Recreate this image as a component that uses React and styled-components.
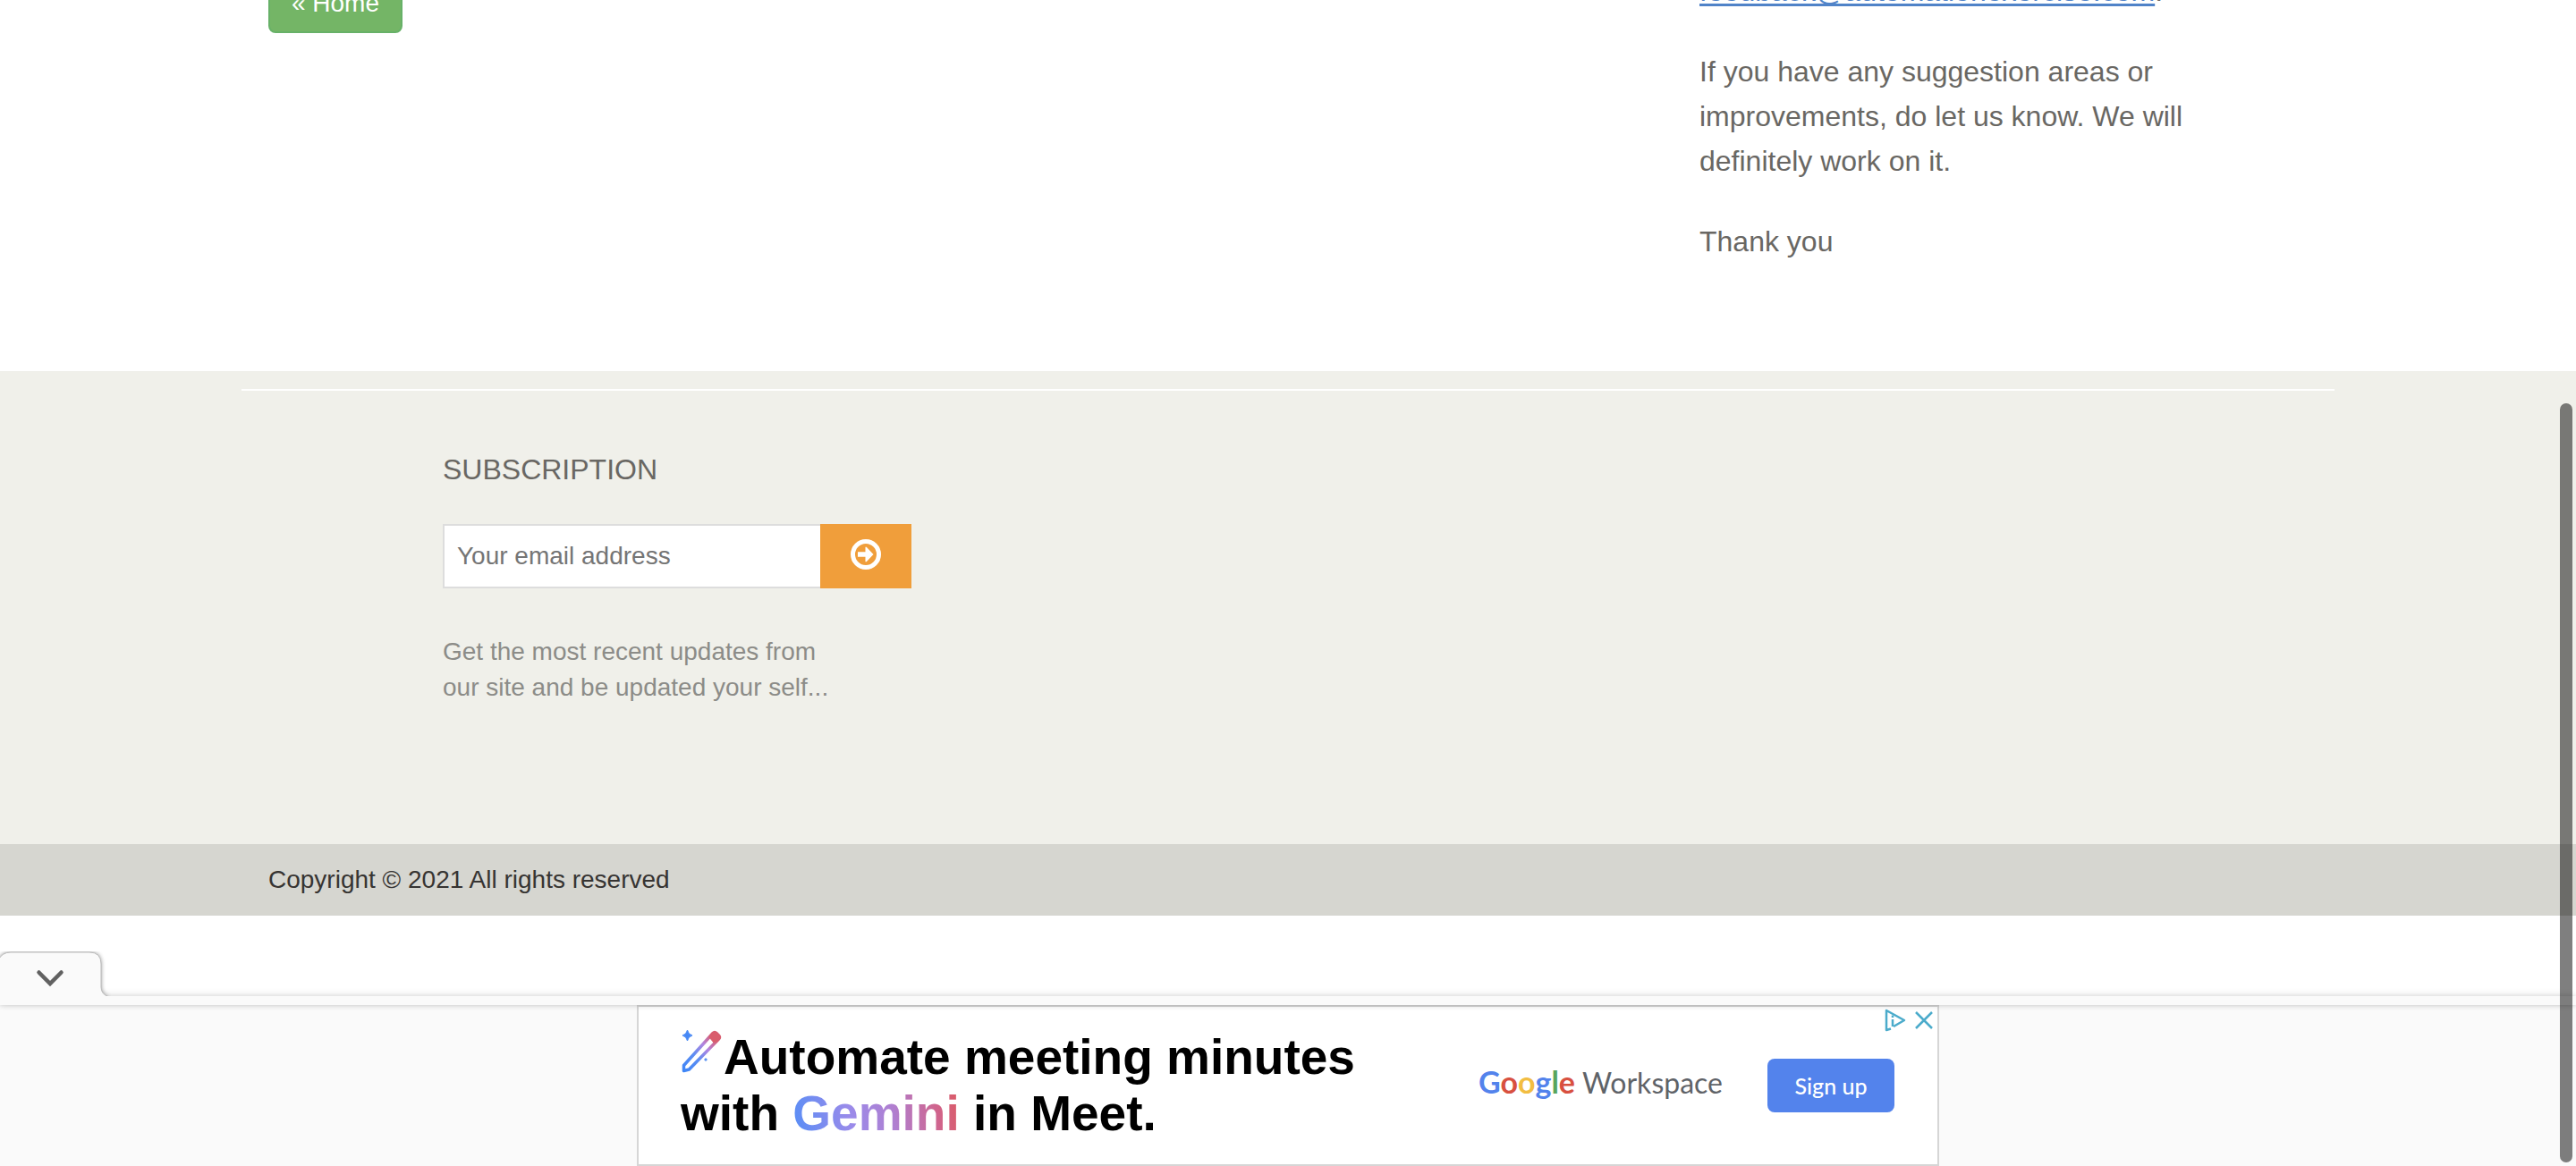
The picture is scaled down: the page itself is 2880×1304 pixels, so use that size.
import React from 'react';
import styled, { createGlobalStyle } from 'styled-components';

const Global = createGlobalStyle`
  * { box-sizing: border-box; }
  html, body { margin: 0; background: #fff; }
  body { font-family: "Liberation Sans", Arial, sans-serif; color: #696763; overflow: hidden; }
  p, h2, h3 { margin: 0; font-weight: 400; }
`;

const Page = styled.div`
  display: flex;
  flex-direction: column;
  height: 100vh;
`;

const Container = styled.div`
  width: 100%;
  max-width: 2340px;
  margin: 0 auto;
  padding: 0 30px;
`;

const Content = styled(Container)`
  display: flex;
  justify-content: space-between;
  align-items: flex-start;
  height: 415px;
`;

const HomeButton = styled.button`
  width: 150px;
  height: 68px;
  margin-top: -31px;
  padding: 2px 0 0;
  border: 2px solid #67b168;
  border-radius: 8px;
  background: #74b566;
  color: #fff;
  font: 28px/40px "Liberation Sans", Arial, sans-serif;
`;

const Feedback = styled.div`
  display: flex;
  flex-direction: column;
  gap: 40px;
  width: 680px;
  margin-top: -35px;
  font-size: 32px;
  line-height: 50px;
  p { max-width: 580px; }
`;

const MailLink = styled.a`
  color: #5083c8;
  text-decoration: underline;
  text-decoration-thickness: 3px;
  text-decoration-skip-ink: none;
  text-underline-offset: 3px;
`;

const Footer = styled.footer`
  background: #f0f0ea;
`;

const FooterTop = styled.div`
  padding: 20px 30px 0;
  height: 529px;
`;

const Rule = styled.hr`
  width: 100%;
  max-width: 2340px;
  height: 2px;
  margin: 0 auto;
  border: 0;
  background: #fff;
`;

const Widget = styled(Container)`
  display: flex;
  flex-direction: column;
  padding: 68px 225px 0;
`;

const WidgetTitle = styled.h2`
  font-size: 32px;
  line-height: 40px;
  text-transform: uppercase;
`;

const Form = styled.form`
  display: flex;
  height: 72px;
  margin: 41px 0 51px;
`;

const Email = styled.input`
  width: 422px;
  padding: 0 14px;
  border: 2px solid #ddd;
  border-right: 0;
  border-radius: 0;
  background: #fff;
  font: 28px "Liberation Sans", Arial, sans-serif;
  &::placeholder { color: #757575; opacity: 1; }
`;

const Submit = styled.button`
  display: flex;
  justify-content: center;
  align-items: center;
  width: 102px;
  padding: 0 0 4px;
  border: 0;
  background: #f09e3b;
`;

const Note = styled.p`
  color: #8c8c88;
  font-size: 28px;
  line-height: 40px;
`;

const Copyright = styled.div`
  display: flex;
  align-items: center;
  height: 80px;
  background: #d6d6d0;
  color: #363432;
  font-size: 28px;
  line-height: 40px;
`;

const AdDock = styled.aside`
  display: flex;
  flex-direction: column;
  margin-top: 40px;
`;

const TabHolder = styled.div`
  position: relative;
  z-index: 2;
  height: 50px;
`;

const Tab = styled.button`
  display: flex;
  padding: 0;
  border: 0;
  background: none;
  width: 124px;
  height: 50px;
`;

const Strip = styled.div`
  position: relative;
  z-index: 1;
  height: 10px;
  background: #fafafa;
  box-shadow: 0 -1px 8px rgba(0, 0, 0, 0.13), 0 1px 5px rgba(0, 0, 0, 0.1);
`;

const AdArea = styled.div`
  display: flex;
  justify-content: center;
  height: 180px;
  background: #fafafa;
`;

const Ad = styled.section`
  position: relative;
  display: flex;
  align-items: center;
  width: 1456px;
  height: 180px;
  padding: 0 48px 0 47px;
  border: 2px solid #d6d6d6;
  background: #fff;
`;

const Headline = styled.h2`
  width: 892px;
  color: #000;
  font: 700 55px/63px "Liberation Sans", Arial, sans-serif;
  white-space: nowrap;
`;

const Gradient = styled.span`
  background: linear-gradient(80deg, #568ef6 0%, #9a8bea 35%, #b07fd0 60%, #d0648c 85%, #dc5a62 100%);
  -webkit-background-clip: text;
  background-clip: text;
  color: transparent;
`;

const Wand = styled.svg`
  display: inline-block;
  vertical-align: baseline;
  margin-right: 2px;
`;

const Brand = styled.div`
  display: flex;
  align-items: baseline;
  gap: 8px;
  flex: 1;
  padding-bottom: 8px;
  color: #5f6368;
  font: 400 32px/40px Lato, "Open Sans", sans-serif;
`;

const Google = styled.span`
  font-size: 34px;
  font-weight: 700;
`;

const Letter = styled.span`
  color: ${(p) => p.$color};
`;

const SignUp = styled.a`
  display: flex;
  justify-content: center;
  align-items: center;
  width: 142px;
  height: 60px;
  border-radius: 8px;
  background: #5383ec;
  color: #fff;
  font: 500 25px/32px Lato, "Open Sans", sans-serif;
  text-decoration: none;
`;

const AdControls = styled.div`
  position: absolute;
  top: 0;
  right: 0;
  display: flex;
`;

const IconButton = styled.button`
  display: flex;
  padding: 0;
  border: 0;
  background: none;
`;

const ScrollThumb = styled.div`
  position: fixed;
  z-index: 3;
  top: 451px;
  right: 4px;
  bottom: 4px;
  width: 14px;
  border-radius: 7px;
  background: rgba(0, 0, 0, 0.5);
`;

const LETTERS = [
  ['G', '#5383ec'],
  ['o', '#d85040'],
  ['o', '#f2bd42'],
  ['g', '#5383ec'],
  ['l', '#58a55c'],
  ['e', '#d85040'],
];

export default function App() {
  return (
    <Page>
      <Global />
      <Content as="main">
        <HomeButton type="button">« Home</HomeButton>
        <Feedback>
          <p><MailLink href="mailto:feedback@automationexercise.com">feedback@automationexercise.com</MailLink>.</p>
          <p>If you have any suggestion areas or improvements, do let us know. We will definitely work on it.</p>
          <p>Thank you</p>
        </Feedback>
      </Content>
      <Footer>
        <FooterTop>
          <Rule />
          <Widget>
            <WidgetTitle>Subscription</WidgetTitle>
            <Form onSubmit={(e) => e.preventDefault()}>
              <Email type="email" aria-label="Your email address" placeholder="Your email address" />
              <Submit type="submit" aria-label="Subscribe">
                <svg width="36" height="36" viewBox="0 0 36 36">
                  <circle cx="18" cy="18" r="14.5" fill="none" stroke="#fff" strokeWidth="5" />
                  <path d="M9 15.2h8.500v-5.400l1.200 0 7.800 8.200-7.800 8.200h-1.200v-5.400H9z" fill="#fff" />
                </svg>
              </Submit>
            </Form>
            <Note>Get the most recent updates from<br />our site and be updated your self...</Note>
          </Widget>
        </FooterTop>
        <Copyright>
          <Container><p>Copyright © 2021 All rights reserved</p></Container>
        </Copyright>
      </Footer>
      <AdDock>
        <TabHolder>
          <Tab type="button" aria-label="Collapse">
            <svg width="124" height="50" viewBox="0 0 124 50">
              <defs>
                <filter id="tabShadow" x="-10%" y="-20%" width="120%" height="140%">
                  <feGaussianBlur stdDeviation="2.5" />
                </filter>
              </defs>
              <path d="M-2 10Q2 1 12 1H100Q113 1 113 14V40Q113 48 122 51H-2z" fill="#000" opacity=".45" filter="url(#tabShadow)" />
              <path d="M-2 10Q2 1 12 1H100Q113 1 113 14V40Q113 48 122 51H-2z" fill="#fafafa" stroke="#bbb" strokeWidth="1" />
              <path d="M43.500 23.500L56 36L68.500 23.500" fill="none" stroke="#616161" strokeWidth="4.500" strokeLinecap="round" />
            </svg>
          </Tab>
        </TabHolder>
        <Strip />
        <AdArea>
          <Ad>
            <Headline>
              <Wand width="46" height="50" viewBox="0 0 46 50">
                <defs>
                  <linearGradient id="wand" x1="0" y1="1" x2="1" y2="0">
                    <stop offset="0" stopColor="#3f86f7" />
                    <stop offset=".35" stopColor="#5c8df2" />
                    <stop offset=".62" stopColor="#b285e0" />
                    <stop offset=".85" stopColor="#d85c70" />
                  </linearGradient>
                </defs>
                <path d="M3.500 40.500L36 4.500Q38 2.500 40 4.500L42.500 7Q44.500 9 42.500 11L9.500 45L3.500 46.500z" fill="none" stroke="url(#wand)" strokeWidth="3.500" strokeLinejoin="round" />
                <path d="M38 2L45 9L37 15L32 9z" fill="#d95d6c" stroke="#d95d6c" strokeWidth="1" strokeLinejoin="round" />
                <path d="M7.500 1Q8.500 6 13 7Q8.500 8 7.500 13Q6.500 8 2 7Q6.500 6 7.500 1z" fill="#4688f5" stroke="#4688f5" />
                <path d="M28 32l2 2-2 2-2-2z" fill="#5b93f2" />
              </Wand>
              Automate meeting minutes<br />with <Gradient>Gemini</Gradient> in Meet.
            </Headline>
            <Brand>
              <Google>{LETTERS.map(([l, c], i) => <Letter key={i} $color={c}>{l}</Letter>)}</Google>
              <span>Workspace</span>
            </Brand>
            <SignUp href="#signup">Sign up</SignUp>
            <AdControls>
              <IconButton type="button" aria-label="Ad information">
                <svg width="30" height="30" viewBox="0 0 30 30">
                  <path d="M8 24.500L3 26V4L23 15L11 22" fill="none" stroke="#4babcb" strokeWidth="2.500" strokeLinejoin="round" />
                  <path d="M10 9.500v2.500M10 14v8" fill="none" stroke="#4babcb" strokeWidth="2.500" />
                </svg>
              </IconButton>
              <IconButton type="button" aria-label="Close ad">
                <svg width="30" height="30" viewBox="0 0 30 30">
                  <path d="M6 6L24 24M24 6L6 24" stroke="#4babcb" strokeWidth="2.500" />
                </svg>
              </IconButton>
            </AdControls>
          </Ad>
        </AdArea>
      </AdDock>
      <ScrollThumb />
    </Page>
  );
}
